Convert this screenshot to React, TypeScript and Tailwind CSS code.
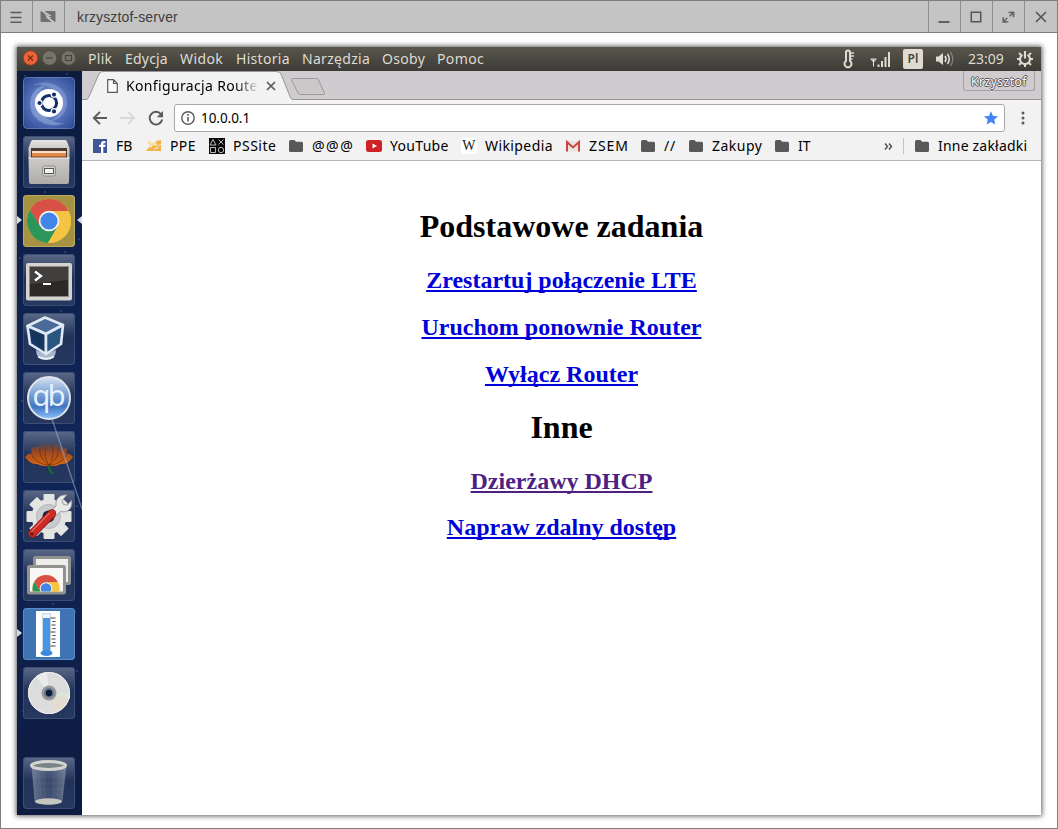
import React from "react";

const ui = "font-['Noto_Sans',sans-serif]";

/* ---------- launcher icons (52 x 52) ---------- */

const Dash = () => (
  <svg viewBox="0 0 52 52" className="size-full">
    <defs>
      <radialGradient id="dashGlow" cx=".5" cy=".5" r=".65">
        <stop offset="0" stopColor="#a5b9e8" />
        <stop offset=".5" stopColor="#5874bb" />
        <stop offset="1" stopColor="#304b95" />
      </radialGradient>
    </defs>
    <rect width="52" height="52" rx="4" fill="url(#dashGlow)" />
    <path d="M10 8C24 1 44 9 44 25c0 12-8 19-18 19 10-4 14-10 13-19C38 14 24 6 10 8z" fill="#a9bbe6" opacity=".35" />
    <path d="M42 46C26 53 7 43 7 27 7 16 14 9 24 8c-8 4-11 10-10 17 1 12 14 22 28 21z" fill="#c0d0f2" opacity=".35" />
    <rect x=".5" y=".5" width="51" height="51" rx="4" fill="none" stroke="#7f98d2" strokeOpacity=".5" />
    <circle cx="26" cy="26" r="14" fill="#fff" />
    <circle cx="26" cy="26" r="7.6" fill="none" stroke="#14306b" strokeWidth="3" />
    <g stroke="#fff" strokeWidth="1.2" fill="#14306b">
      <circle cx="16.500" cy="26" r="2.700" />
      <circle cx="31" cy="17.600" r="2.700" />
      <circle cx="31" cy="34.400" r="2.700" />
    </g>
  </svg>
);

const Files = () => (
  <svg viewBox="0 0 52 52" className="size-full">
    <defs>
      <linearGradient id="cab" x2="0" y2="1">
        <stop offset="0" stopColor="#e6e5e3" />
        <stop offset="1" stopColor="#b4b3b2" />
      </linearGradient>
      <linearGradient id="drawer" x2="0" y2="1">
        <stop offset="0" stopColor="#cdccca" />
        <stop offset="1" stopColor="#adacab" />
      </linearGradient>
    </defs>
    <path d="M8 5.500q.3-1.500 2-1.500h32q1.700 0 2 1.500L46.500 12v9h-41v-9z" fill="url(#cab)" />
    <path d="M5.500 21h41L46 46q0 2-2 2H8q-2 0-2-2z" fill="url(#drawer)" />
    <rect x="8" y="12" width="36" height="10" fill="#493a33" />
    <path d="M9 15h34v2.500H9z" fill="#ffdfc6" />
    <path d="M9 17h34v3.500H9z" fill="#e38a4a" />
    <path d="M9 20h34v1.500H9z" fill="#b36131" />
    <path d="M5.500 22h41" stroke="#e8e8e5" strokeWidth="1.200" />
    <rect x="19.500" y="30" width="13" height="10" rx="2" fill="#d4d3d1" stroke="#8d8c8a" />
    <rect x="21.500" y="32.500" width="9" height="5" fill="#f5f5f3" stroke="#555" />
  </svg>
);

function ChromeBall({ x, y, r }: { x: number; y: number; r: number }) {
  return (
    <g transform={`translate(${x} ${y}) scale(${r / 22})`}>
      <circle r="22" fill="#f6c443" />
      <path d="M-19.050-11A22 22 0 0 1 19.500-10H0L-9.500 5z" fill="#d95046" />
      <path d="M-19.050-11A22 22 0 0 0-1 22L9 5-9 5z" fill="#2c955a" />
      <path d="M19.500-10A22 22 0 0 1-1 22L9.500 4 5-10z" fill="#f6c443" />
      <circle r="10.300" fill="#f4f4f2" />
      <circle r="8.600" fill="#4285e8" />
    </g>
  );
}

const Chrome = () => (
  <svg viewBox="0 0 52 52" className="size-full">
    <ChromeBall x={26} y={26} r={22} />
  </svg>
);

const TerminalIcon = () => (
  <svg viewBox="0 0 52 52" className="size-full">
    <rect x="3" y="9" width="46" height="37.500" rx="2" fill="#d4d3cf" />
    <rect x="6.500" y="12.500" width="39" height="30" fill="#2b2a28" stroke="#8b8a87" />
    <path d="M7 13h38v13L7 30z" fill="#fff" opacity=".1" />
    <path d="M12 17.500l6 4.500-6 4.500" fill="none" stroke="#fff" strokeWidth="2.300" />
    <path d="M20 30h8" stroke="#fff" strokeWidth="2" />
  </svg>
);

const VBox = () => (
  <svg viewBox="0 0 52 52" className="size-full">
    <path d="M13 37q0 10 10 10t10-10l-10 4z" fill="#aab6cc" />
    <path d="M15 43.500q8 4.500 16 0" stroke="#eef2f8" strokeWidth="2" fill="none" />
    <g stroke="#dfe8f5" strokeWidth="2.600" strokeLinejoin="round">
      <path d="M22 4.500L40 12 23 21 4.500 13z" fill="#4a6a98" />
      <path d="M4.500 13L23 21v20L7 31z" fill="#183a68" />
      <path d="M40 12L23 21v20l15-10z" fill="#29557f" />
    </g>
    <path d="M8 17l12 6v12l-10-7z" fill="#16355d" />
  </svg>
);

const QBit = () => (
  <svg viewBox="0 0 52 52" className="size-full">
    <defs>
      <linearGradient id="qb" x2="0" y2="1">
        <stop offset="0" stopColor="#d5e2f2" />
        <stop offset=".35" stopColor="#86a9d8" />
        <stop offset=".7" stopColor="#3f76c0" />
        <stop offset="1" stopColor="#8dc2ff" />
      </linearGradient>
    </defs>
    <circle cx="26" cy="26" r="21" fill="url(#qb)" stroke="#dde3eb" strokeWidth="2" />
    <text x="26" y="34" textAnchor="middle" fontFamily="Noto Sans" fontSize="29" fill="#e8f2ff" textLength="33">qb</text>
  </svg>
);

const Leaf = () => (
  <svg viewBox="0 0 52 52" className="size-full">
    <defs>
      <linearGradient id="leaf" x2="0" y2="1">
        <stop offset="0" stopColor="#8a4a30" stopOpacity=".15" />
        <stop offset=".4" stopColor="#b34c16" stopOpacity=".85" />
        <stop offset="1" stopColor="#dd6a10" />
      </linearGradient>
    </defs>
    <path d="M2 26Q6 21 9 23 6 14 15 16 19 9 26 13 33 9 37 16 46 14 43 23 46 21 50 26 44 34 38 33 32 36 26 34.500 20 36 14 33 8 34 2 26z" fill="url(#leaf)" />
    <path d="M26 34.500Q12 32 9 24M26 34.500Q15 26 17 17M26 34.500Q20 24 23 15M26 34.500Q32 24 29 15M26 34.500Q37 26 35 17M26 34.500Q40 32 43 24" fill="none" stroke="#682a12" strokeWidth=".8" opacity=".85" />
    <path d="M25.500 34.500q1 6 4.500 8" stroke="#186b2d" strokeWidth="2.200" fill="none" />
  </svg>
);

const Settings = () => (
  <svg viewBox="0 0 52 52" className="size-full">
    <g fill="#e4e4e2">
      <circle cx="26" cy="26.500" r="17.500" />
      {[0, 45, 90, 135].map((a) => (
        <rect key={a} x="20.500" y="4" width="11" height="45" rx="1" transform={`rotate(${a} 26 26.500)`} />
      ))}
    </g>
    <circle cx="25.500" cy="26.500" r="12" fill="#c9cbcc" stroke="#b3b5b8" />
    <circle cx="25.500" cy="26.500" r="6" fill="#14254c" />
    <path d="M27 22l6-6c-1-7 4-12 11-11l-5 5.500 1.500 4 4 .5 4-5c2 8-4 13.500-11 11.500l-6 6z" fill="#e9e9e7" stroke="#858789" strokeWidth=".8" />
    <path d="M9.500 43.500L29 23.500" stroke="#851414" strokeWidth="8.500" strokeLinecap="round" />
    <path d="M9.500 43.500L29 23.500" stroke="#cd2b25" strokeWidth="7" strokeLinecap="round" />
    <path d="M9 41L26 23.500" stroke="#e9645c" strokeWidth="1.500" strokeLinecap="round" />
    <circle cx="9" cy="44" r="1.600" fill="#5d1414" />
  </svg>
);

const Remote = () => (
  <svg viewBox="0 0 52 52" className="size-full">
    <rect x="11.500" y="8.500" width="35" height="26" rx="1" fill="#eeeeec" stroke="#929290" strokeWidth="3" />
    <rect x="5.500" y="17.500" width="36" height="26.500" rx="1" fill="#f7f7f5" stroke="#929290" strokeWidth="3" />
    <clipPath id="remoteClip">
      <rect x="7" y="19" width="33" height="23.500" />
    </clipPath>
    <g clipPath="url(#remoteClip)">
      <ChromeBall x={23} y={39.5} r={13.5} />
    </g>
  </svg>
);

const Thermo = () => (
  <svg viewBox="0 0 52 52" className="size-full">
    <rect x="13" y="3" width="24" height="46" fill="#fff" />
    <rect x="19.500" y="5.500" width="8" height="38" fill="#eef5fc" stroke="#c5d8ea" />
    <path d="M20 10h7v34h-7z" fill="#4a94e4" />
    <ellipse cx="23.500" cy="45" rx="6" ry="3" fill="#3b88df" />
    <path d="M27.500 7v31" stroke="#ccd2d9" />
    <path d="M27.500 10h5M29.500 13.500h3M28.500 17h4M29.500 20.500h3M27.500 24h5M29.500 27.500h3M28.500 31h4M29.500 34.500h3M27.500 38h5" stroke="#444" />
  </svg>
);

const Disc = () => (
  <svg viewBox="0 0 52 52" className="size-full">
    <circle cx="26" cy="26" r="21" fill="#dcdcdc" />
    <path d="M26 26L13 9.500A21 21 0 0 1 24 5z" fill="#eaeaea" />
    <path d="M26 26L5.500 22A21 21 0 0 1 9 14z" fill="#d9dfdc" />
    <path d="M26 26L46 32A21 21 0 0 1 34 45z" fill="#e3dccf" />
    <path d="M26 26L47 25v7z" fill="#dbe6d7" />
    <circle cx="26" cy="26" r="20.500" fill="none" stroke="#f0f0f0" />
    <circle cx="26" cy="26" r="7.500" fill="#93979e" />
    <circle cx="26" cy="26" r="5" fill="#687388" />
    <circle cx="26" cy="26" r="3.200" fill="#0c1c3c" />
  </svg>
);

const Trash = () => (
  <svg viewBox="0 0 52 52" className="size-full">
    <defs>
      <linearGradient id="bin">
        <stop offset="0" stopColor="#a4aebf" stopOpacity=".55" />
        <stop offset=".5" stopColor="#6d7890" stopOpacity=".3" />
        <stop offset="1" stopColor="#a4aebf" stopOpacity=".55" />
      </linearGradient>
    </defs>
    <path d="M9 10l3 34q14 6 27 0L43 10z" fill="url(#bin)" stroke="#7d889c" strokeWidth=".5" />
    <path d="M16 13l2 28M21 14l1 28M26 14v28M31 14l-1 28M36 13l-2 28M11 20h30M11 26h30M12 32h28M12 38h27" stroke="#aab3c0" strokeWidth=".3" opacity=".25" />
    <ellipse cx="25.500" cy="44.500" rx="13.500" ry="3.200" fill="#c6c7c0" />
    <ellipse cx="25.500" cy="8.500" rx="17" ry="4" fill="#7b8388" stroke="#d3d4cf" strokeWidth="3" />
  </svg>
);

const glass = "bg-linear-to-b from-[#5c6a88] via-[#22335a] via-45% to-[#273860] ring-1 ring-inset ring-[#3d4e76]";
const launcher: { icon: React.FC; bg: string; left?: boolean; right?: boolean }[] = [
  { icon: Dash, bg: "" },
  { icon: Files, bg: glass },
  { icon: Chrome, bg: "bg-[#a59343] ring-1 ring-inset ring-[#b9a95c]", left: true, right: true },
  { icon: TerminalIcon, bg: glass },
  { icon: VBox, bg: glass },
  { icon: QBit, bg: glass },
  { icon: Leaf, bg: glass },
  { icon: Settings, bg: glass },
  { icon: Remote, bg: glass },
  { icon: Thermo, bg: "bg-[#3f74b4] ring-1 ring-inset ring-[#5b8bc4]", left: true },
  { icon: Disc, bg: glass },
  { icon: Trash, bg: glass },
];

function Launcher() {
  return (
    <div className="relative w-[65px] shrink-0 overflow-hidden bg-linear-to-b from-[#0c1b3e] via-[#10265a] to-[#0e1b40]">
      <svg className="absolute inset-0" width="65" height="744" viewBox="0 0 65 744">
        <g fill="#6580b8" opacity=".45">
          {[[8, 5], [50, 3], [28, 121], [48, 181], [3, 187], [62, 168], [44, 240], [5, 330], [9, 402], [58, 374], [60, 435], [4, 460], [36, 533], [58, 541], [12, 548], [60, 600], [6, 640]].map(([x, y]) => (
            <circle key={y} cx={x} cy={y} r=".9" />
          ))}
        </g>
      </svg>
      <div className="relative flex h-full flex-col gap-[7px] pt-[6px] pb-[6px] pl-[6px]">
        {launcher.map(({ icon: Icon, bg, left, right }, i) => (
          <div key={i} className={`relative size-[52px] shrink-0 ${i === 11 ? "mt-[31px]" : ""}`}>
            <div className={`size-full overflow-hidden rounded-[4px] ${bg}`}>
              <Icon />
            </div>
            {left && (
              <svg className="absolute top-[20px] -left-[6px]" width="5" height="10" viewBox="0 0 5 10">
                <path d="M0 1v8l5-4z" fill="#d8dce3" />
              </svg>
            )}
            {right && (
              <svg className="absolute top-[20px] -right-[7px]" width="6" height="10" viewBox="0 0 6 10">
                <path d="M6 1v8L1 5z" fill="#d8dce3" />
              </svg>
            )}
          </div>
        ))}
      </div>
      <svg className="absolute inset-0" width="65" height="744" viewBox="0 0 65 744">
        <path d="M35 348L65 438" stroke="#aab2d0" strokeWidth="1.300" opacity=".55" />
      </svg>
    </div>
  );
}

/* ---------- outer window title bar ---------- */

function TitleBar() {
  const cell = "flex w-8 shrink-0 items-center justify-center border-[#8e8e8e] pr-px";
  return (
    <div className="flex h-[32px] shrink-0 border-b border-[#7f7f7f] bg-[#c4c4c4]">
      <div className={`${cell} border-r`}>
        <svg width="12" height="12" viewBox="0 0 12 12" className="text-[#5a5a5a]">
          <path d="M.5 1.500h11M.5 6.500h11M.5 11.200h11" stroke="currentColor" strokeWidth="1.500" />
        </svg>
      </div>
      <div className={`${cell} border-r`}>
        <svg width="16" height="13" viewBox="0 0 16 13">
          <rect x=".5" y="1" width="15" height="11" rx="1" fill="#707070" />
          <path d="M2 .5L8.500 5l-1 2.500 6.500 5" stroke="#c4c4c4" strokeWidth="2" fill="none" />
          <path d="M5 3.500l2.500 4h3.500M8 5.500h3" stroke="#c4c4c4" strokeWidth="1" fill="none" />
        </svg>
      </div>
      <div className="flex-1 pl-3 font-['Liberation_Sans',sans-serif] text-[14px] leading-[32px] tracking-[0.13px] text-[#3e3e3e]">krzysztof-server</div>
      <div className={`${cell} border-l`}>
        <svg width="12" height="12" viewBox="0 0 12 12"><path d="M.5 11h11" stroke="#555" strokeWidth="1.800" /></svg>
      </div>
      <div className={`${cell} border-l`}>
        <svg width="12" height="12" viewBox="0 0 12 12"><path d="M1.250 1.250h9.500v9.500h-9.500z" fill="none" stroke="#555" strokeWidth="1.500" /></svg>
      </div>
      <div className={`${cell} border-l`}>
        <svg width="13" height="12" viewBox="0 0 13 12" fill="none" stroke="#666" strokeWidth="1.500">
          <path d="M6.500 1.500h5v4.700M11.500 1.500L7.500 5.200M1.300 6.200v4.600h5M1.300 10.800L5.300 7" />
          <path d="M12.200.8v4L8.200.8zM.6 11.500v-4l4 4z" fill="#666" stroke="none" />
        </svg>
      </div>
      <div className="flex w-[33px] shrink-0 items-center justify-center border-l border-[#8e8e8e] pr-px">
        <svg width="12" height="12" viewBox="0 0 12 12"><path d="M1 1l10 10M11 1L1 11" stroke="#555" strokeWidth="1.600" /></svg>
      </div>
    </div>
  );
}

/* ---------- desktop menu bar ---------- */

const menu: [string, string][] = [
  ["Plik", "w-[37px] tracking-[0.3px]"],
  ["Edycja", "w-[55px] tracking-[0.2px]"],
  ["Widok", "w-[56px] tracking-[0.4px]"],
  ["Historia", "w-[66px] tracking-[0.3px]"],
  ["Narzędzia", "w-[80px] tracking-[0.3px]"],
  ["Osoby", "w-[55px] tracking-[0.3px]"],
  ["Pomoc", "w-[60px] tracking-[0.4px]"],
];

function MenuBar() {
  return (
    <div className={`flex h-[24px] shrink-0 items-center bg-linear-to-b from-[#59574c] to-[#3c3b36] pl-[6px] text-[14px] leading-[24px] text-[#dfdbd2] ${ui}`}>
      <svg width="56" height="16" viewBox="0 0 56 16" className="mr-[9px] -translate-y-px shrink-0">
        <circle cx="7.500" cy="8" r="7.200" fill="#ec6238" stroke="#a03a1b" strokeWidth=".8" />
        <path d="M5 5.500l5 5M10 5.500l-5 5" stroke="#6b2c17" strokeWidth="1.100" />
        <circle cx="26.500" cy="8" r="7.200" fill="#77756b" stroke="#4c4b43" strokeWidth=".8" />
        <path d="M23 8h7" stroke="#45443c" strokeWidth="1.200" />
        <circle cx="45.500" cy="8" r="7.200" fill="#77756b" stroke="#4c4b43" strokeWidth=".8" />
        <rect x="42.500" y="5.500" width="6" height="5" fill="none" stroke="#45443c" strokeWidth="1.100" />
      </svg>
      {menu.map(([t, c]) => (
        <div key={t} className={`shrink-0 whitespace-nowrap ${c}`}>{t}</div>
      ))}
      <svg width="12" height="20" viewBox="0 0 12 20" className="mr-[15px] ml-auto" fill="none" stroke="#dfdbd2">
        <path d="M3 3.500a2 2 0 0 1 4 0V12a3.500 3.500 0 1 1-4 0z" strokeWidth="2" />
        <path d="M8 4h3M8 7h3M8 10h1.500" strokeWidth="1.600" />
      </svg>
      <svg width="21" height="18" viewBox="0 0 21 18" className="mr-[12px]" fill="none" stroke="#dfdbd2">
        <path d="M.5 9h6M1 9l2.500 3L6 9M3.500 9v7.500" strokeWidth="1.100" />
        <path d="M8.500 14.500V17M12 11v6M15.500 7v10M19 2v15" strokeWidth="2" />
      </svg>
      <div className="mr-[12px] flex h-[20px] w-[20px] items-center justify-center rounded-[2px] bg-[#dfdbd2] text-[12px] leading-[20px] font-semibold text-[#45443e]">Pl</div>
      <svg width="20" height="18" viewBox="0 0 20 18" className="mr-[13px]" fill="none" stroke="#dfdbd2">
        <path d="M1 6.500h2.500L8 3v12l-4.500-3.500H1z" fill="#dfdbd2" stroke="none" />
        <path d="M10 6q2 3 0 6" strokeWidth="1.600" />
        <path d="M12.500 4q3.500 5 0 10" strokeWidth="1.600" />
        <path d="M15.500 2q4.500 7 0 14" strokeWidth="1.300" opacity=".4" />
      </svg>
      <div className="w-[36px] whitespace-nowrap text-[14px]">23:09</div>
      <svg width="18" height="18" viewBox="0 0 18 18" className="mr-[7px] ml-[12px]" fill="none" stroke="#dfdbd2">
        <path d="M6.500 4.800a5 5 0 1 0 5 0" strokeWidth="2.100" />
        <path d="M9 1v7.500" strokeWidth="2.100" />
        <path d="M3 3l2 2M15 3l-2 2M1 9h3M14 9h3M3 15l2-2M15 15l-2-2M9 14v3" strokeWidth="2" />
      </svg>
    </div>
  );
}

/* ---------- browser ---------- */

function Tabs() {
  return (
    <div className="relative flex h-[29px] shrink-0 bg-[#cfcbce]">
      <svg className="absolute inset-0" width="959" height="29" viewBox="0 0 959 29">
        <path d="M0 28.500H4q2 0 3-3L17 3q1-2.500 4-2.500H194q4 0 5 2.500l9 22.500q1 3 3 3H959V30H0z" fill="#f2f2f2" stroke="#98949a" />
        <path d="M209.500 9q-.8-1.500 1-1.500h24q1.500 0 2 1.500l6 13q.7 1.500-1 1.500h-23q-2 0-2.500-1.500z" fill="#cbc8ca" stroke="#9b999b" />
      </svg>
      <svg className="relative mt-[8px] ml-[25px] shrink-0" width="11" height="14" viewBox="0 0 11 14">
        <path d="M.7.700h5.800l3.800 3.800v8.800H.7zM6.500.700v3.800h3.800" fill="#fafafa" stroke="#5a5a5a" strokeWidth="1.200" />
      </svg>
      <div className="relative ml-[8px] w-[132px] overflow-hidden bg-linear-to-r from-black from-80% to-[#e8e8e8] to-100% bg-clip-text text-[14px] leading-[29px] tracking-[0.35px] whitespace-nowrap text-transparent">
        Konfiguracja Route
      </div>
      <svg className="relative mt-[10px] ml-[8px]" width="10" height="10" viewBox="0 0 10 10">
        <path d="M1 1l8 8M9 1L1 9" stroke="#5a5a5a" strokeWidth="1.700" />
      </svg>
      <div className="relative mr-[6px] ml-auto h-[20px] w-[72px] rounded-b-[3px] border border-t-0 border-[#a4a0a3] pt-px text-center text-[12px] leading-[20px] tracking-[0.5px] text-white [text-shadow:1px_0_0_#555,-1px_0_0_#555,0_1px_0_#555,0_-1px_0_#555]">
        Krzysztof
      </div>
    </div>
  );
}

function AddressBar() {
  return (
    <div className="flex h-[35px] shrink-0 items-center bg-[#f2f2f2] pt-[1px] pl-[10px]">
      <svg width="16" height="14" viewBox="0 0 16 14" fill="none" stroke="#5a5a5a" strokeWidth="1.900">
        <path d="M15 7H2M8 .8L1.800 7 8 13.200" />
      </svg>
      <svg width="16" height="14" viewBox="0 0 16 14" className="ml-[12px]" fill="none" stroke="#d9d9d9" strokeWidth="1.800">
        <path d="M0 7h13.500M8 .8L14.200 7 8 13.200" />
      </svg>
      <svg width="16" height="16" viewBox="0 0 16 16" className="ml-[12px]">
        <path d="M13 4.200A6.300 6.300 0 1 0 14.200 9.500" fill="none" stroke="#5a5a5a" strokeWidth="1.900" />
        <path d="M15 1v6.200H8.800z" fill="#5a5a5a" />
      </svg>
      <div className="ml-[10px] flex h-[28px] w-[831px] items-center rounded-[3px] border border-[#a8a8ab] bg-white pr-[6px] pl-[6px]">
        <svg width="14" height="14" viewBox="0 0 14 14">
          <circle cx="7" cy="7" r="6.200" fill="none" stroke="#5a5a5a" strokeWidth="1.400" />
          <path d="M7 6v4.500M7 3v1.700" stroke="#5a5a5a" strokeWidth="1.600" />
        </svg>
        <div className="ml-[6px] flex-1 text-[13.5px] leading-[26px] tracking-[-0.05px] text-black">10.0.0.1</div>
        <svg width="14" height="14" viewBox="0 0 24 24">
          <path d="M12 .5l3.500 8 8.500.7-6.500 5.600 2 8.500-7.500-4.500-7.500 4.500 2-8.500L0 9.200l8.500-.7z" fill="#4285f4" />
        </svg>
      </div>
      <svg width="4" height="14" viewBox="0 0 4 14" className="ml-[16px]" fill="#5a5a5a">
        <circle cx="2" cy="2" r="1.500" />
        <circle cx="2" cy="7" r="1.500" />
        <circle cx="2" cy="12" r="1.500" />
      </svg>
    </div>
  );
}

const Folder = () => (
  <svg width="16" height="16" viewBox="0 0 16 16">
    <path d="M1 3.500Q1 2 2.500 2h4L8 3.700h5.500q1.500 0 1.500 1.500v7.300q0 1.500-1.500 1.500h-11Q1 14 1 12.500z" fill="#59595b" />
  </svg>
);
const Facebook = () => (
  <svg width="16" height="16" viewBox="0 0 16 16">
    <rect x="1" y="1" width="14" height="14" fill="#3f5799" />
    <path d="M9 15V9H7V6.800h2V5.500Q9 3 11.500 3h2v2.200H12q-.7 0-.7.800v.8h2.200L13.200 9h-1.900v6z" fill="#fff" />
  </svg>
);
const Ppe = () => (
  <svg width="16" height="16" viewBox="0 0 16 16">
    <path d="M1 3.500l4-1v3.500l4-2 6-2v10l-6-2-8 2 3-4z" fill="#f9dfa0" />
    <path d="M0 13l3-4 2 1 2-4 3 2 5-1v6z" fill="#f4b24d" />
    <path d="M10 3l5-1v4l-4 1z" fill="#f3b24f" />
    <path d="M5 9l3-3 2 2M8 11l5-2" stroke="#fff0cd" fill="none" />
  </svg>
);
const PsSite = () => (
  <svg width="16" height="16" viewBox="0 0 16 16" fill="none" stroke="#ccc" strokeWidth=".9">
    <rect width="16" height="16" fill="#0a0a0a" stroke="none" />
    <path d="M4 1.500L1 7h6zM9.500 1.500l5 5M14.500 1.500l-5 5M1.500 9.500h5v5h-5z" />
    <circle cx="12" cy="12" r="2.700" />
  </svg>
);
const YouTube = () => (
  <svg width="16" height="16" viewBox="0 0 16 16">
    <rect y="2" width="16" height="12" rx="2.500" fill="#cf2226" />
    <path d="M6.500 5.500l4.500 2.500-4.500 2.500z" fill="#fff" />
  </svg>
);
const Wikipedia = () => (
  <div className="size-4 rounded-[2px] bg-white text-center font-['Liberation_Serif',serif] text-[14px] leading-[16px] text-[#222]">W</div>
);
const Gmail = () => (
  <svg width="16" height="16" viewBox="0 0 16 16">
    <path d="M1 3h14v10.500H1z" fill="#e9e4e3" />
    <path d="M2 13.500V4l6 5.500L14 4v9.500" fill="none" stroke="#c9463e" strokeWidth="2" />
  </svg>
);

const bookmarks: { icon: React.FC; label: string; cls: string }[] = [
  { icon: Facebook, label: "FB", cls: "w-[54px]" },
  { icon: Ppe, label: "PPE", cls: "w-[63px] tracking-[0.4px]" },
  { icon: PsSite, label: "PSSite", cls: "w-[79px] tracking-[0.5px]" },
  { icon: Folder, label: "@@@", cls: "w-[78px] tracking-[1.5px]" },
  { icon: YouTube, label: "YouTube", cls: "w-[95px] tracking-[0.3px]" },
  { icon: Wikipedia, label: "Wikipedia", cls: "w-[104px] tracking-[0.4px]" },
  { icon: Gmail, label: "ZSEM", cls: "w-[75px] tracking-[0.9px]" },
  { icon: Folder, label: "//", cls: "w-[48px] tracking-[0.8px]" },
  { icon: Folder, label: "Zakupy", cls: "w-[86px] tracking-[0.5px]" },
  { icon: Folder, label: "IT", cls: "w-[60px]" },
];

function Bookmarks() {
  return (
    <div className="flex h-[26px] shrink-0 items-start border-b border-[#b6b4b6] bg-[#f2f2f2] pt-[2px] pl-[10px] text-[14px] leading-[18px] text-black">
      {bookmarks.map(({ icon: Icon, label, cls }) => (
        <div key={label} className={`flex shrink-0 items-center gap-2 whitespace-nowrap ${cls}`}>
          <Icon />
          <span>{label}</span>
        </div>
      ))}
      <svg width="9" height="9" viewBox="0 0 9 9" className="mt-[5px] mr-[10px] ml-auto" fill="none" stroke="#4d4d4d" strokeWidth="1.400">
        <path d="M1 1.500l2.500 3L1 7.500M5 1.500l2.500 3L5 7.500" />
      </svg>
      <div className="mt-[1px] mr-[10px] h-[16px] w-px bg-[#c3c3c3]" />
      <div className="flex w-[127px] items-center gap-2 tracking-[0.2px] whitespace-nowrap">
        <Folder />
        <span>Inne zakładki</span>
      </div>
    </div>
  );
}

function Page() {
  const link = "text-[24px] leading-[28px] underline underline-offset-[2px] decoration-[2px] [text-decoration-skip-ink:none]";
  return (
    <div className="flex flex-1 flex-col items-center bg-white pt-[47px] font-['Liberation_Serif',serif] font-bold text-black">
      <h1 className="text-[32px] leading-[36px]">Podstawowe zadania</h1>
      <a className={`mt-[22px] text-[#0000d8] ${link}`}>Zrestartuj połączenie LTE</a>
      <a className={`mt-[19px] text-[#0000d8] ${link}`}>Uruchom ponownie Router</a>
      <a className={`mt-[19px] text-[#0000d8] ${link}`}>Wyłącz Router</a>
      <h1 className="mt-[21px] text-[32px] leading-[36px]">Inne</h1>
      <a className={`mt-[22px] text-[#4f1f85] ${link}`}>Dzierżawy DHCP</a>
      <a className={`mt-[18px] text-[#0000d8] ${link}`}>Napraw zdalny dostęp</a>
    </div>
  );
}

export default function App() {
  return (
    <div className="flex h-[829px] w-[1058px] flex-col overflow-hidden border border-[#7f7f7f] bg-white">
      <TitleBar />
      <div className="flex-1 pt-[14px] pl-[16px]">
        <div className="flex h-[768px] w-[1024px] flex-col shadow-[0_0_5px_1px_rgba(0,0,0,0.65)]">
          <MenuBar />
          <div className="flex min-h-0 flex-1">
            <Launcher />
            <div className={`flex min-w-0 flex-1 flex-col ${ui}`}>
              <Tabs />
              <AddressBar />
              <Bookmarks />
              <Page />
            </div>
          </div>
        </div>
      </div>
    </div>
  );
}
